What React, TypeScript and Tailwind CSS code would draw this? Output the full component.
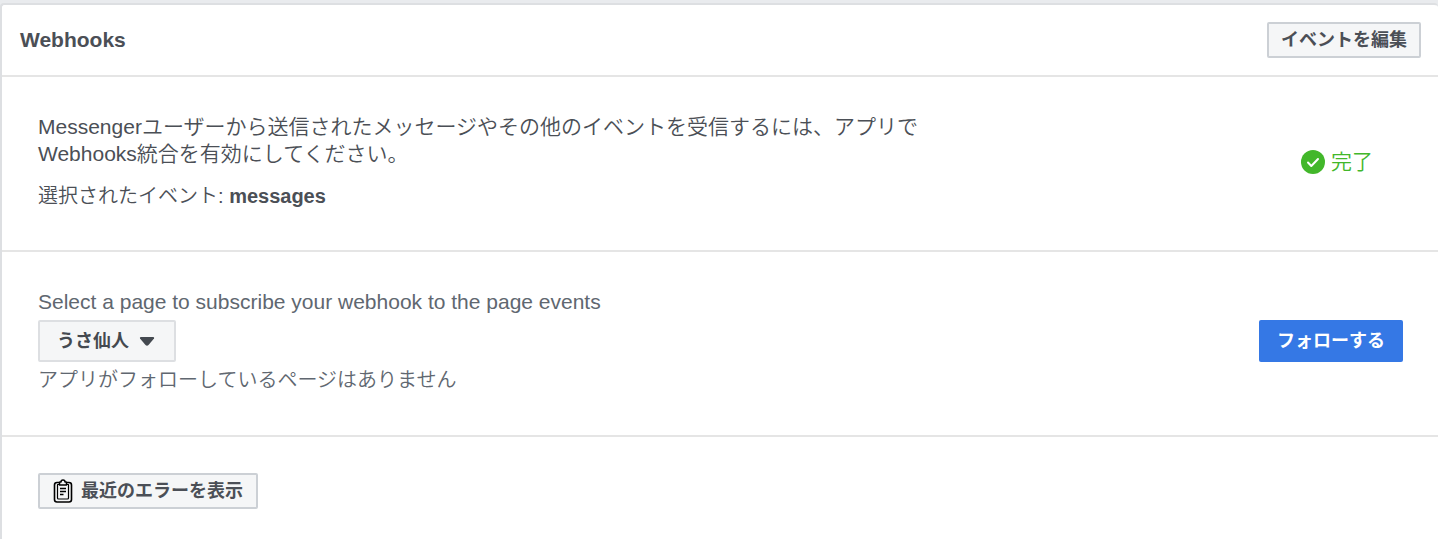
import { useState } from "react";

const CheckIcon = () => (
  <svg width="24" height="24" viewBox="0 0 24 24" aria-hidden="true">
    <circle cx="12" cy="12" r="12" fill="#42b72a" />
    <path
      d="M7 12.500l3.300 3.500L17 9"
      fill="none"
      stroke="#fff"
      strokeWidth="2"
      strokeLinecap="round"
      strokeLinejoin="round"
    />
  </svg>
);

const ClipboardIcon = () => (
  <svg
    width="20"
    height="24"
    viewBox="0 0 20 24"
    fill="none"
    stroke="#000"
    strokeLinejoin="round"
    aria-hidden="true"
  >
    <path
      d="M6 3.500H4a2.500 2.500 0 0 0-2.500 2.500v14.500a2.500 2.500 0 0 0 2.500 2.500h12a2.500 2.500 0 0 0 2.500-2.500V6a2.500 2.500 0 0 0-2.500-2.500h-2"
      strokeWidth="1.600"
    />
    <path
      d="M6.500 5.500H4.500v13.500q0 1 1 1h9q1 0 1-1V5.500h-2"
      strokeWidth="1.200"
    />
    <path
      d="M6.500 6V3.500q0-.5.500-.5h1a2 2 0 0 1 4 0h1q.5 0 .5.500V6z"
      fill="#f5f6f7"
      strokeWidth="1.500"
    />
    <path d="M7 9.500h6M7 12.500h6M7 15.500h3.500" strokeWidth="1.300" />
  </svg>
);

const pages = ["うさ仙人"];

const App = () => {
  const [page, setPage] = useState(pages[0]);

  return (
    <div className="min-h-screen bg-[#e9ebee] pt-[3px] font-['Liberation_Sans','Noto_Sans_CJK_JP',sans-serif] text-[#4b4f56]">
      <main className="min-h-[calc(100vh-3px)] rounded-t border-t-2 border-l-2 border-[#dddfe2] bg-white">
        <header className="flex h-[72px] items-center justify-between border-b-2 border-[#e5e5e5] pr-[17px] pl-[18px]">
          <h1 className="text-[21px] font-bold">Webhooks</h1>
          <button className="h-9 rounded-xs border-2 border-[#ccd0d5] bg-[#f5f6f7] px-3 text-[18px] leading-none font-bold">
            イベントを編集
          </button>
        </header>

        <section className="flex items-center justify-between border-b-2 border-[#e5e5e5] pt-9 pr-[65px] pb-10 pl-9 font-[350]">
          <div className="text-[20px] leading-[27px]">
            <p className="max-w-[890px] text-[21px]">
              Messengerユーザーから送信されたメッセージやその他のイベントを受信するには、アプリで
              <br />
              Webhooks統合を有効にしてください。
            </p>
            <p className="mt-4">
              選択されたイベント: <strong className="font-bold">messages</strong>
            </p>
          </div>
          <div className="flex items-center gap-[6px] text-[21px] text-[#42b72a]">
            <CheckIcon />
            完了
          </div>
        </section>

        <section className="flex items-center justify-between border-b-2 border-[#e5e5e5] pt-9 pr-[35px] pb-[41px] pl-9 font-[350] text-[#606770]">
          <div className="text-[20px] leading-[27px]">
            <label htmlFor="page" className="block text-[21px]">
              Select a page to subscribe your webhook to the page events
            </label>
            <div className="relative my-[5px] w-fit text-[#4b4f56]">
              <select
                id="page"
                value={page}
                onChange={(e) => setPage(e.target.value)}
                className="block h-[42px] appearance-none rounded-xs border-2 border-[#dddfe2] bg-[#f5f6f7] pr-[45px] pl-[17px] text-[18px] leading-none font-bold text-[#444950]"
              >
                {pages.map((name) => (
                  <option key={name}>{name}</option>
                ))}
              </select>
              <svg
                className="pointer-events-none absolute top-4 right-[21px]"
                width="16"
                height="10"
                viewBox="0 0 16 10"
                fill="#444950"
                aria-hidden="true"
              >
                <path d="M2 1h12q1.500 0 1 1.500L9.500 9q-1.500 1.500-3 0L1 2.500Q.5 1 2 1z" />
              </svg>
            </div>
            <p>アプリがフォローしているページはありません</p>
          </div>
          <button className="h-[42px] rounded-xs bg-[#3578e5] px-[18px] text-[18px] leading-none font-bold text-white">
            フォローする
          </button>
        </section>

        <section className="py-9 pl-9">
          <button className="flex h-9 items-center gap-2 rounded-xs border-2 border-[#ccd0d5] bg-[#f5f6f7] px-[13px] text-[18px] leading-none font-bold">
            <ClipboardIcon />
            最近のエラーを表示
          </button>
        </section>
      </main>
    </div>
  );
};

export default App;
